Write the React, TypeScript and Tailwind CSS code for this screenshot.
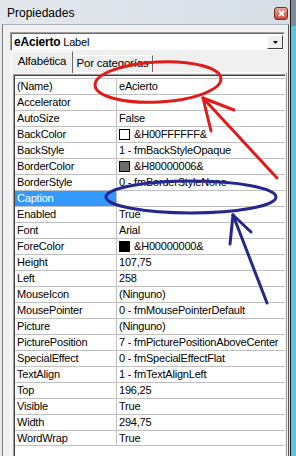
import React from "react";

type Row = {
  name: string;
  value: string;
  swatch?: string;
};

const ROWS: Row[] = [
  { name: "(Name)", value: "eAcierto" },
  { name: "Accelerator", value: "" },
  { name: "AutoSize", value: "False" },
  { name: "BackColor", value: "&H00FFFFFF&", swatch: "#ffffff" },
  { name: "BackStyle", value: "1 - fmBackStyleOpaque" },
  { name: "BorderColor", value: "&H80000006&", swatch: "#6b6b6b" },
  { name: "BorderStyle", value: "0 - fmBorderStyleNone" },
  { name: "Caption", value: "" },
  { name: "Enabled", value: "True" },
  { name: "Font", value: "Arial" },
  { name: "ForeColor", value: "&H00000000&", swatch: "#000000" },
  { name: "Height", value: "107,75" },
  { name: "Left", value: "258" },
  { name: "MouseIcon", value: "(Ninguno)" },
  { name: "MousePointer", value: "0 - fmMousePointerDefault" },
  { name: "Picture", value: "(Ninguno)" },
  { name: "PicturePosition", value: "7 - fmPicturePositionAboveCenter" },
  { name: "SpecialEffect", value: "0 - fmSpecialEffectFlat" },
  { name: "TextAlign", value: "1 - fmTextAlignLeft" },
  { name: "Top", value: "196,25" },
  { name: "Visible", value: "True" },
  { name: "Width", value: "294,75" },
  { name: "WordWrap", value: "True" },
];

const SELECTED = "Caption";

function PropRow({ row, last }: { row: Row; last: boolean }) {
  const selected = row.name === SELECTED;
  return (
    <div
      className={`flex h-[16px] border-t border-[#c0c0c0] ${
        last ? "border-b" : ""
      }`}
    >
      <div
        className={`w-[102px] shrink-0 border-r border-[#c0c0c0] pl-[2px] leading-[15px] ${
          selected ? "bg-[#3399ff] text-white" : "text-black"
        }`}
      >
        {row.name}
      </div>
      <div className="flex flex-1 items-center gap-[4px] pl-[2px] leading-[15px] text-black">
        {row.swatch && (
          <span
            className="h-[11px] w-[11px] shrink-0 border border-black"
            style={{ backgroundColor: row.swatch }}
          />
        )}
        <span className="whitespace-nowrap">{row.value}</span>
      </div>
    </div>
  );
}

// hand-drawn marks on top of the screenshot
function Annotations() {
  return (
    <svg
      className="pointer-events-none absolute inset-0"
      width={296}
      height={456}
      viewBox="0 0 296 456"
      fill="none"
      strokeLinecap="round"
    >
      <g stroke="#e11b1b" strokeWidth={3}>
        <ellipse cx={158} cy={82} rx={63} ry={20} transform="rotate(-3 158 82)" />
        <path d="M203 98 L277 178" />
        <path d="M203 98 L211 131" />
        <path d="M203 98 L234 110" />
      </g>
      <g stroke="#26268e" strokeWidth={3}>
        <ellipse cx={191} cy={197} rx={85} ry={16} />
        <path d="M233 215 L267 303" />
        <path d="M233 215 L230 244" />
        <path d="M233 215 L251 232" />
      </g>
    </svg>
  );
}

export default function App() {
  return (
    <div className="relative flex h-[456px] w-[296px] overflow-hidden bg-[#5ec3dc] font-['Liberation_Sans',Arial,sans-serif] text-[11px] tracking-[-0.2px]">
      <div className="flex w-[291px] shrink-0 flex-col border-r border-[#1e1e1e] bg-gradient-to-r from-[#e3e8ed] to-[#d6dee6] pl-[2px] pr-[1px]">
        {/* title bar */}
        <div className="flex h-[24px] shrink-0 items-center justify-between pl-[5px] pr-[1px] pt-[2px]">
          <span className="text-[12px] tracking-normal text-black">Propiedades</span>
          <div className="flex h-[13px] w-[14px] items-center justify-center rounded-[3px] border border-[#7a2b22] bg-gradient-to-b from-[#e8a494] to-[#c24a3c]">
            <svg width="7" height="7" viewBox="0 0 7 7">
              <path d="M1 1 L6 6 M6 1 L1 6" stroke="white" strokeWidth={1.8} />
            </svg>
          </div>
        </div>

        {/* body */}
        <div className="flex flex-1 flex-col border-l border-r border-t border-l-[#7a7a7a] border-r-[#5a5a5a] border-t-[#a7afb8] bg-[#f0f0f0] pt-[7px]">
          {/* object combo */}
          <div className="ml-[7px] flex h-[18px] w-[274px] border-l border-t border-[#a0a0a0] border-b-white border-r-white">
            <div className="flex flex-1 items-center border-l border-t border-[#696969] bg-white pl-[2px] pr-[1px]">
              <span className="flex-1 whitespace-nowrap text-black">
                <b className="text-[12px]">eAcierto</b> Label
              </span>
              <div className="flex h-[14px] w-[16px] items-center justify-center border-b border-l border-r border-t border-b-[#404040] border-l-white border-r-[#404040] border-t-white bg-[#f0f0f0]">
                <svg width="5" height="3" viewBox="0 0 5 3">
                  <path d="M0 0 H5 L2.5 3 Z" fill="black" />
                </svg>
              </div>
            </div>
          </div>

          {/* tabs */}
          <div className="ml-[8px] mt-[1px] flex h-[21px] items-end">
            <div className="relative z-10 -mb-px flex h-[22px] w-[62px] items-center justify-center border-l border-r border-t border-l-white border-r-[#696969] border-t-white bg-[#f0f0f0] pb-[2px] text-[11.5px] text-black">
              Alfabética
            </div>
            <div className="flex h-[17px] w-[80px] items-center justify-center border-r border-t border-r-[#696969] border-t-white text-[11.5px] text-black">
              Por categorías
            </div>
          </div>

          {/* tab panel */}
          <div className="ml-[7px] mr-[1px] flex flex-1 flex-col border-l border-r border-t border-l-white border-r-[#a0a0a0] border-t-white pl-[2px] pr-[1px] pt-[1px]">
            <div className="flex flex-1 flex-col border-l border-t border-[#a0a0a0]">
              <div className="flex-1 border-l border-t border-[#404040] bg-white pt-[2px]">
                {ROWS.map((r, i) => (
                  <PropRow key={r.name} row={r} last={i === ROWS.length - 1} />
                ))}
              </div>
            </div>
          </div>
        </div>
      </div>

      <div className="flex flex-1 flex-col">
        <div className="h-[26px] bg-[#7b8c9a]" />
        <div className="flex-1" />
      </div>

      <Annotations />
    </div>
  );
}
